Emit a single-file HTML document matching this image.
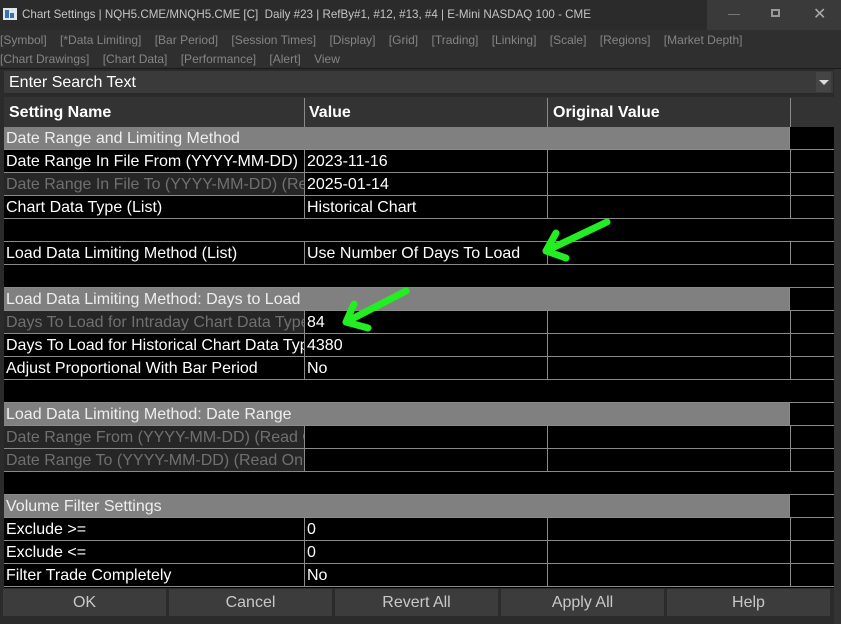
<!DOCTYPE html>
<html><head><meta charset="utf-8"><style>
*{margin:0;padding:0;box-sizing:border-box}
body{width:841px;height:624px;background:#2b2b2b;position:relative;overflow:hidden;font-family:"Liberation Sans",sans-serif;}
.a{position:absolute;white-space:nowrap;overflow:hidden}
.tab{font-size:12px;color:#858585;}
.c{position:absolute;height:23px;font-size:16px;line-height:24px;padding-left:2px;color:#fff;overflow:hidden;white-space:nowrap;border-right:1px solid #8a8a8a}
.hl{position:absolute;left:4px;width:830px;height:1px;background:#8a8a8a}
.btn{position:absolute;top:589px;height:27px;background:#3c3c3c;color:#c8c8c8;font-size:16px;line-height:27px;text-align:center}
</style></head><body>
<div class="a" style="left:0;top:0;width:841px;height:30px;background:#2b2b2b"></div>
<div class="a" style="left:707px;top:0;width:134px;height:30px;background:#3a3a3a"></div>
<div class="a" style="left:3px;top:8px;width:14px;height:12px;background:#dfe6ee"><div style="position:absolute;left:2px;top:2px;width:4px;height:8px;background:#3a6fb0"></div><div style="position:absolute;left:7px;top:5px;width:4px;height:5px;background:#3a6fb0"></div></div>
<div class="a" style="left:22px;top:8px;font-size:11.6px;color:#c4c4c4">Chart Settings | NQH5.CME/MNQH5.CME [C]&nbsp; Daily #23 | RefBy#1, #12, #13, #4 | E-Mini NASDAQ 100 - CME</div>
<div class="a" style="left:728px;top:14px;width:12px;height:1px;background:#777"></div>
<div class="a" style="left:771px;top:9px;width:9px;height:8px;border:2px solid #999"></div>
<div class="a" style="left:813px;top:4px;font-size:16px;color:#aaa">✕</div>
<div class="a" style="left:0;top:30px;width:841px;height:38px;background:#2f2f2f"></div>
<div class="a tab" style="left:0;top:33px">[Symbol]&nbsp;&nbsp;&nbsp; [*Data Limiting]&nbsp;&nbsp;&nbsp; [Bar Period]&nbsp;&nbsp;&nbsp; [Session Times]&nbsp;&nbsp;&nbsp; [Display]&nbsp;&nbsp;&nbsp; [Grid]&nbsp;&nbsp;&nbsp; [Trading]&nbsp;&nbsp;&nbsp; [Linking]&nbsp;&nbsp;&nbsp; [Scale]&nbsp;&nbsp;&nbsp; [Regions]&nbsp;&nbsp;&nbsp; [Market Depth]</div>
<div class="a tab" style="left:0;top:52px">[Chart Drawings]&nbsp;&nbsp;&nbsp; [Chart Data]&nbsp;&nbsp;&nbsp; [Performance]&nbsp;&nbsp;&nbsp; [Alert]&nbsp;&nbsp;&nbsp; View</div>
<div class="a" style="left:0;top:68px;width:841px;height:1px;background:#1a1a1a"></div>
<div class="a" style="left:3px;top:70px;width:831px;height:24px;background:#3a3a3a;border:1px solid #2a2a2a"></div>
<div class="a" style="left:9px;top:72px;font-size:16px;line-height:21px;color:#fff">Enter Search Text</div>
<div class="a" style="left:816px;top:72px;width:15px;height:20px;background:#454545"></div>
<div class="a" style="left:819px;top:80px;width:0;height:0;border-left:5px solid transparent;border-right:5px solid transparent;border-top:5px solid #ddd"></div>
<div class="a" style="left:834px;top:69px;width:7px;height:555px;background:#333"></div>
<div class="a" style="left:4px;top:97px;width:830px;height:30px;background:#333"></div>
<div class="a" style="left:304px;top:98px;width:1px;height:29px;background:#8a8a8a"></div>
<div class="a" style="left:547px;top:98px;width:1px;height:29px;background:#8a8a8a"></div>
<div class="a" style="left:790px;top:98px;width:1px;height:29px;background:#8a8a8a"></div>
<div class="a" style="left:9px;top:104px;font-size:16px;font-weight:bold;color:#fff">Setting Name</div>
<div class="a" style="left:309px;top:104px;font-size:16px;font-weight:bold;color:#fff">Value</div>
<div class="a" style="left:553px;top:104px;font-size:16px;font-weight:bold;color:#fff">Original Value</div>
<div class="a" style="left:4px;top:127px;width:830px;height:461px;background:#000"></div>
<div id="rows"></div>
<div class="btn" style="left:3px;width:163px">OK</div>
<div class="btn" style="left:169px;width:163px">Cancel</div>
<div class="btn" style="left:335px;width:163px">Revert All</div>
<div class="btn" style="left:501px;width:163px">Apply All</div>
<div class="btn" style="left:667px;width:163px">Help</div>
<svg class="a" style="left:0;top:0" width="841" height="624"><g stroke="#22ee22" stroke-width="7" stroke-linecap="round" fill="none"><path d="M607 222 L546 251 M546 251 L556 233 M546 251 L566 258"/><path d="M406 291 L346 322 M346 322 L354 304 M346 322 L368 328"/></g></svg>
<script>
var R=[["g","Date Range and Limiting Method"],["n","Date Range In File From (YYYY-MM-DD)","2023-11-16"],["r","Date Range In File To (YYYY-MM-DD) (Read Only)","2025-01-14"],["n","Chart Data Type (List)","Historical Chart"],["e"],["n","Load Data Limiting Method (List)","Use Number Of Days To Load"],["e"],["g","Load Data Limiting Method: Days to Load"],["r","Days To Load for Intraday Chart Data Type","84"],["n","Days To Load for Historical Chart Data Type","4380"],["n","Adjust Proportional With Bar Period","No"],["e"],["g","Load Data Limiting Method: Date Range"],["r","Date Range From (YYYY-MM-DD) (Read Only)",""],["r","Date Range To (YYYY-MM-DD) (Read Only)",""],["e"],["g","Volume Filter Settings"],["n","Exclude >=","0"],["n","Exclude <=","0"],["n","Filter Trade Completely","No"]];
var h="";R.forEach(function(r,i){var y=127+i*23;
if(r[0]=="g"){h+='<div class="c" style="left:4px;top:'+y+'px;width:786px;background:#808080;color:#eee">'+r[1]+'</div>';}
else if(r[0]!="e"){var rd=r[0]=="r";
h+='<div class="c" style="left:4px;top:'+y+'px;width:301px;'+(rd?'background:#262626;color:#707070':'')+'">'+r[1].replace(/</g,"&lt;").replace(/>/g,"&gt;")+'</div>';
h+='<div class="c" style="left:305px;top:'+y+'px;width:243px">'+r[2]+'</div>';
h+='<div class="c" style="left:548px;top:'+y+'px;width:243px"></div>';}
h+='<div class="hl" style="top:'+(y+22)+'px"></div>';});
document.getElementById("rows").innerHTML=h;
</script>
</body></html>
